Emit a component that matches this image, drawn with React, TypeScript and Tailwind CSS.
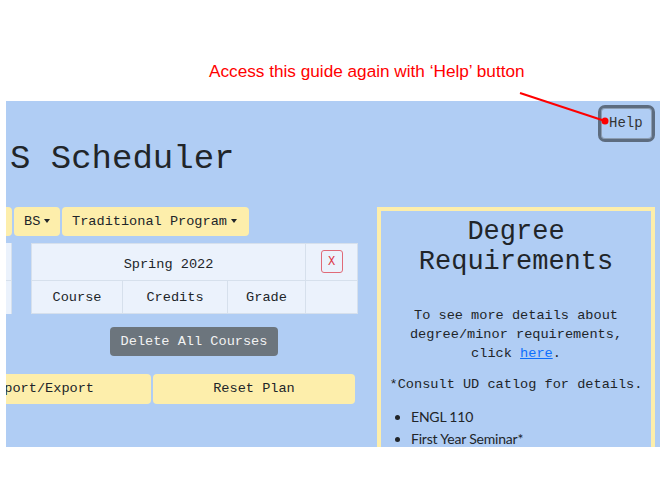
import React from "react";

const mono = { fontFamily: '"Liberation Mono", "DejaVu Sans Mono", monospace' };

function Caret() {
  return (
    <span className="inline-block ml-[4px] align-middle w-0 h-0 border-l-[3px] border-r-[3px] border-t-[4px] border-l-transparent border-r-transparent border-t-[#212529] relative top-[-1px]" />
  );
}

export default function App() {
  return (
    <div className="relative w-[667px] h-[500px] bg-white overflow-hidden" style={mono}>
      <div
        className="h-[101px] pt-[61px] pl-[209px] text-[17.2px] leading-[20px] text-[#ff0000]"
        style={{ fontFamily: '"Liberation Sans", Arial, sans-serif' }}
      >
        Access this guide again with ‘Help’ button
      </div>

      <div className="ml-[6px] w-[654px] h-[346px] overflow-hidden bg-[#b0cdf4] flex flex-col text-[#212529]">
        <div className="flex justify-end pt-[4px] pr-[5px]">
          <div className="w-[57px] h-[37px] border-[3px] border-[#5d6c7f] rounded-[7px] shadow-[inset_0_0_0_1px_#8c9db2] flex items-center pl-[8px] text-[14px] text-[#333]">
            Help
          </div>
        </div>

        <div className="mt-[-3px] pl-[4px] text-[34px] leading-[40px] text-[#212529]">S Scheduler</div>

        <div className="mt-[28px] flex">
          <div className="w-[371px] shrink-0 flex flex-col">
            <div className="flex h-[29px] text-[13.6px]">
              <div className="w-[6px] bg-[#fdeeab] rounded-r-[4px]" />
              <div className="ml-[2px] w-[46px] bg-[#fdeeab] rounded-[4px] flex items-center pl-[10px] pt-[1px]">
                BS
                <Caret />
              </div>
              <div className="ml-[2px] w-[187px] bg-[#fdeeab] rounded-[4px] flex items-center pl-[10px] pt-[1px]">
                Traditional Program
                <Caret />
              </div>
            </div>

            <div className="mt-[7px] flex text-[13.6px]">
              <div className="w-[6px] h-[71px] bg-[#ebf2fc] border-r border-[#d6e0ec] flex flex-col">
                <div className="h-[38px] border-b border-[#d6e0ec]" />
              </div>
              <div className="ml-[19px] w-[327px] bg-[#ebf2fc] border border-[#d6e0ec] flex flex-col">
                <div className="flex h-[37px] border-b border-[#d6e0ec]">
                  <div className="w-[274px] flex items-center justify-center border-r border-[#d6e0ec] pt-[6px]">
                    Spring 2022
                  </div>
                  <div className="flex-1 flex items-start justify-center pt-[6px]">
                    <div className="w-[22px] h-[23px] border border-[#e06a78] rounded-[3px] flex items-center justify-center text-[12px] text-[#dc3545]">
                      X
                    </div>
                  </div>
                </div>
                <div className="flex h-[32px]">
                  <div className="w-[91px] flex items-center justify-center border-r border-[#d6e0ec] pt-[2px]">Course</div>
                  <div className="w-[105px] flex items-center justify-center border-r border-[#d6e0ec] pt-[2px]">Credits</div>
                  <div className="w-[78px] flex items-center justify-center border-r border-[#d6e0ec] pt-[2px]">Grade</div>
                  <div className="flex-1" />
                </div>
              </div>
            </div>

            <div className="mt-[13px] ml-[104px] w-[168px] h-[29px] bg-[#6c757d] rounded-[4px] flex items-center justify-center text-[13.6px] text-[#f2f2f2] pt-[1px]">
              Delete All Courses
            </div>

            <div className="mt-[18px] flex h-[30px] text-[13.6px]">
              <div className="ml-[-75px] w-[220px] shrink-0 bg-[#fdeeab] rounded-[4px] flex items-center justify-center pt-[1px]">
                Import/Export
              </div>
              <div className="ml-[2px] w-[202px] shrink-0 bg-[#fdeeab] rounded-[4px] flex items-center justify-center pt-[1px]">
                Reset Plan
              </div>
            </div>
          </div>

          <div className="w-[278px] h-[260px] shrink-0 border-4 border-b-0 border-[#fdeeab] flex flex-col items-center">
            <div className="pt-[6px] text-[27px] leading-[30px] text-center">
              Degree
              <br />
              Requirements
            </div>
            <div className="mt-[29px] px-[12px] text-[13.6px] leading-[19px] text-center">
              <p>To see more details about degree/minor requirements,</p>
              <p>
                click <a className="text-[#0d6efd] underline">here</a>.
              </p>
            </div>
            <div className="mt-[12px] text-[13.6px] leading-[19px] text-center">
              *Consult UD catlog for details.
            </div>
            <ul
              className="mt-[12px] self-stretch list-disc pl-[30px] text-[14px] leading-[22px] tracking-[-0.2px]"
              style={{ fontFamily: 'Lato, "Noto Sans", sans-serif' }}
            >
              <li>ENGL 110</li>
              <li>First Year Seminar*</li>
            </ul>
          </div>
        </div>
      </div>

      <svg className="absolute left-0 top-0 pointer-events-none" width="667" height="500">
        <line x1="520" y1="93" x2="605" y2="121" stroke="#ff0000" strokeWidth="2" />
        <circle cx="605" cy="121" r="3.5" fill="#ff0000" />
      </svg>
    </div>
  );
}
